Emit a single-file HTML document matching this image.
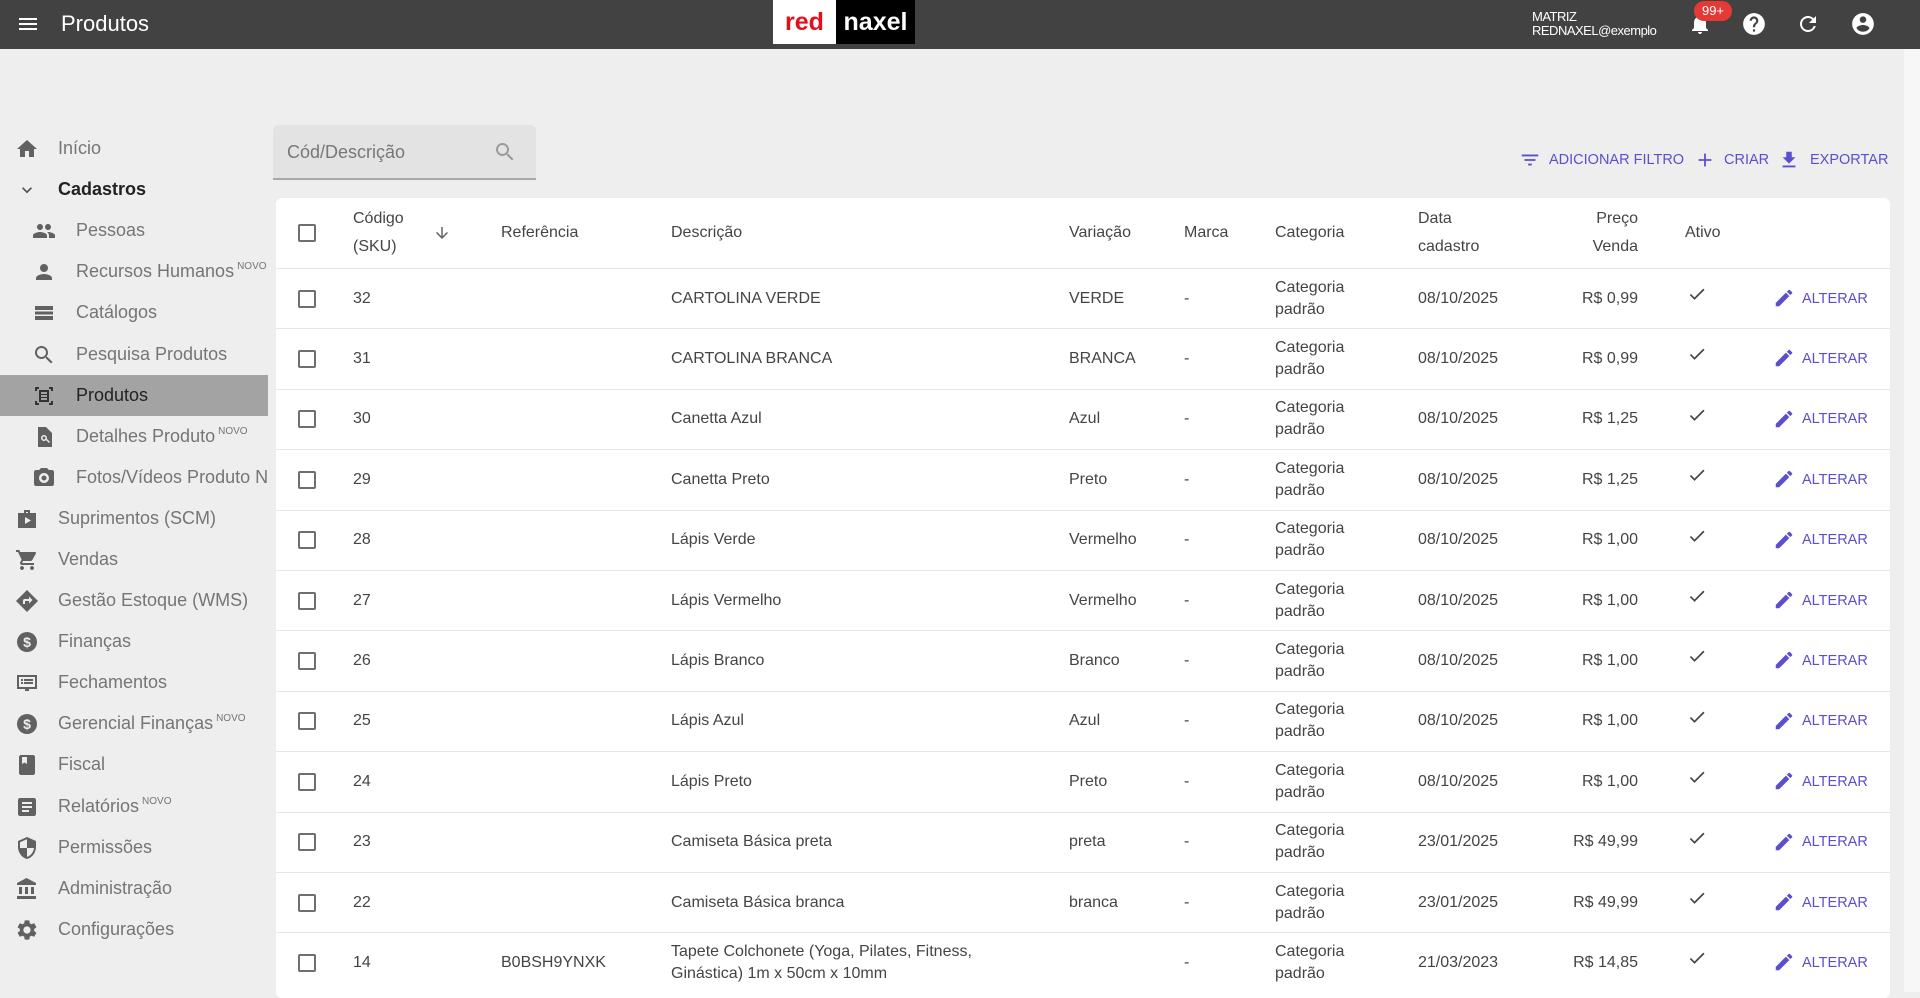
<!DOCTYPE html>
<html><head><meta charset="utf-8"><style>
*{box-sizing:border-box;margin:0;padding:0}
body{width:1920px;height:992px;overflow:hidden;background:#eeeeee;font-family:"Liberation Sans",sans-serif;position:relative}
.top{position:absolute;left:0;top:0;width:1920px;height:49px;background:#424242;color:#fff}
.abs{position:absolute}
svg{display:block}
.side{position:absolute;left:0;top:0;width:268px;height:992px}
.it{position:absolute;left:0;width:268px;height:41px;display:flex;align-items:center;font-size:18px;color:#757575;white-space:nowrap;overflow:hidden}
.it svg{position:absolute;fill:#616161}
.it span{position:absolute;left:58px}
.it.sub span{left:76px}
.it sup{font-size:10px;vertical-align:8px;margin-left:3px}
.card{position:absolute;left:276px;top:198px;width:1614px;height:800px;background:#fff;border-radius:6px;overflow:hidden}
.row{position:absolute;left:0;width:1614px;height:60.4px;border-top:1.5px solid #e6e6e6;font-size:16px;color:#444}
.c{position:absolute;top:0;height:100%;display:flex;align-items:center;line-height:22px}
.cb{position:absolute;left:22px;width:18px;height:18px;border:2px solid #6f6f6f;border-radius:2px;top:50%;margin-top:-9px}
.hd{font-size:16px;color:#444}
.act{color:#5b4fcf;font-size:14.5px}
</style></head><body>

<div class="top">
 <svg class="abs" style="left:16px;top:12px" width="24" height="24" viewBox="0 0 24 24"><path fill="#fff" d="M3 18h18v-2H3v2zm0-5h18v-2H3v2zm0-7v2h18V6H3z"/></svg>
 <div class="abs" style="left:61px;top:11px;font-size:22px">Produtos</div>
 <div class="abs" style="left:773px;top:0;width:63px;height:44px;background:#fff;color:#e3101a;font-weight:bold;font-size:25px;text-align:center;line-height:44px">red</div>
 <div class="abs" style="left:836px;top:0;width:79px;height:44px;background:#000;color:#fff;font-weight:bold;font-size:25px;text-align:center;line-height:44px">naxel</div>
 <div class="abs" style="left:1532px;top:10px;font-size:13px;line-height:14px;letter-spacing:-0.5px">MATRIZ<br>REDNAXEL@exemplo</div>
 <svg class="abs" style="left:1688px;top:12px" width="24" height="24" viewBox="0 0 24 24"><path fill="#fff" d="M12 22c1.1 0 2-.9 2-2h-4c0 1.1.89 2 2 2zm6-6v-5c0-3.07-1.64-5.64-4.5-6.32V4c0-.83-.67-1.5-1.5-1.5s-1.5.67-1.5 1.5v.68C7.63 5.36 6 7.92 6 11v5l-2 2v1h16v-1l-2-2z"/></svg>
 <div class="abs" style="left:1694px;top:1px;width:38px;height:20px;border-radius:10px;background:#e53935;font-size:13px;text-align:center;line-height:20px">99+</div>
 <svg class="abs" style="left:1741px;top:11px" width="26" height="26" viewBox="0 0 24 24"><path fill="#fff" d="M12 2C6.48 2 2 6.48 2 12s4.48 10 10 10 10-4.48 10-10S17.52 2 12 2zm1 17h-2v-2h2v2zm2.07-7.75l-.9.92C13.45 12.9 13 13.5 13 15h-2v-.5c0-1.1.45-2.1 1.17-2.83l1.24-1.26c.37-.36.59-.86.59-1.41 0-1.1-.9-2-2-2s-2 .9-2 2H8c0-2.21 1.79-4 4-4s4 1.79 4 4c0 .88-.36 1.68-.93 2.250z"/></svg>
 <svg class="abs" style="left:1796px;top:12px" width="24" height="24" viewBox="0 0 24 24"><path fill="#fff" d="M17.65 6.35A7.958 7.958 0 0012 4c-4.42 0-7.99 3.58-7.99 8s3.57 8 7.99 8c3.73 0 6.84-2.55 7.73-6h-2.08A5.990 5.990 0 0112 18c-3.31 0-6-2.69-6-6s2.69-6 6-6c1.66 0 3.14.69 4.22 1.78L13 11h7V4l-2.35 2.35z"/></svg>
 <svg class="abs" style="left:1850px;top:11px" width="26" height="26" viewBox="0 0 24 24"><path fill="#fff" d="M12 2C6.48 2 2 6.48 2 12s4.48 10 10 10 10-4.48 10-10S17.52 2 12 2zm0 3c1.66 0 3 1.34 3 3s-1.34 3-3 3-3-1.34-3-3 1.34-3 3-3zm0 14.2a7.2 7.2 0 01-6-3.22c.03-1.99 4-3.08 6-3.08 1.99 0 5.97 1.09 6 3.08a7.2 7.2 0 01-6 3.22z"/></svg>
</div>
<div class="abs" style="left:1904px;top:49px;width:16px;height:943px;background:#f7f7f7"></div>

<div class="side">
 <div class="it" style="top:128px"><svg style="left:15px" width="24" height="24" viewBox="0 0 24 24"><path d="M10 20v-6h4v6h5v-8h3L12 3 2 12h3v8z"/></svg><span>Início</span></div>
 <div class="it" style="top:169px;color:#222;font-weight:bold"><svg style="left:17px" width="20" height="20" viewBox="0 0 24 24"><path fill="#555" d="M7.41 8.59L12 13.17l4.59-4.58L18 10l-6 6-6-6z"/></svg><span>Cadastros</span></div>
 <div class="it sub" style="top:210px"><svg style="left:32px" width="24" height="24" viewBox="0 0 24 24"><path d="M16 11c1.66 0 2.99-1.34 2.99-3S17.66 5 16 5c-1.66 0-3 1.34-3 3s1.34 3 3 3zm-8 0c1.66 0 2.99-1.34 2.99-3S9.66 5 8 5C6.34 5 5 6.34 5 8s1.34 3 3 3zm0 2c-2.33 0-7 1.17-7 3.5V19h14v-2.5c0-2.33-4.67-3.5-7-3.5zm8 0c-.29 0-.62.02-.97.05 1.16.84 1.97 1.97 1.97 3.45V19h6v-2.5c0-2.33-4.67-3.5-7-3.5z"/></svg><span>Pessoas</span></div>
 <div class="it sub" style="top:251px"><svg style="left:32px" width="24" height="24" viewBox="0 0 24 24"><path d="M12 12c2.21 0 4-1.79 4-4s-1.79-4-4-4-4 1.79-4 4 1.79 4 4 4zm0 2c-2.67 0-8 1.34-8 4v2h16v-2c0-2.66-5.33-4-8-4z"/></svg><span>Recursos Humanos<sup>NOVO</sup></span></div>
 <div class="it sub" style="top:292px"><svg style="left:32px" width="24" height="24" viewBox="0 0 24 24"><path d="M3 5h18v4H3zM3 10.5h18v3H3zM3 15h18v4H3z"/></svg><span>Catálogos</span></div>
 <div class="it sub" style="top:334px"><svg style="left:32px" width="24" height="24" viewBox="0 0 24 24"><path d="M15.5 14h-.79l-.28-.27C15.41 12.59 16 11.11 16 9.5 16 5.91 13.09 3 9.5 3S3 5.91 3 9.5 5.91 16 9.5 16c1.61 0 3.09-.59 4.23-1.57l.27.28v.79l5 4.99L20.49 19l-4.99-5zm-6 0C7.01 14 5 11.99 5 9.5S7.01 5 9.5 5 14 7.01 14 9.5 11.99 14 9.5 14z"/></svg><span>Pesquisa Produtos</span></div>
 <div class="it sub" style="top:375px;background:#a3a3a3;color:#222"><svg style="left:32px" width="24" height="24" viewBox="0 0 24 24"><path fill="#333" d="M3 3h4v2H5v2H3zM17 3h4v4h-2V5h-2zM3 17h2v2h2v2H3zM19 17h2v4h-4v-2h2zM7 6h10v12H7zm2 2v2h6V8zm0 3v2h6v-2zm0 3v2h6v-2z"/></svg><span>Produtos</span></div>
 <div class="it sub" style="top:416px"><svg style="left:32px" width="24" height="24" viewBox="0 0 24 24"><path d="M6 2h8l6 6v14H6zM12 10a3 3 0 100 6 3 3 0 000-6zm0 1.5a1.5 1.5 0 110 3 1.5 1.5 0 010-3zM14 15l3 3 1-1-3-3z"/></svg><span>Detalhes Produto<sup>NOVO</sup></span></div>
 <div class="it sub" style="top:457px"><svg style="left:32px" width="24" height="24" viewBox="0 0 24 24"><path d="M9 2L7.17 4H4c-1.1 0-2 .9-2 2v12c0 1.1.9 2 2 2h16c1.1 0 2-.9 2-2V6c0-1.1-.9-2-2-2h-3.17L15 2H9zm3 15c-2.76 0-5-2.24-5-5s2.24-5 5-5 5 2.24 5 5-2.24 5-5 5zm0-7.5a2.5 2.5 0 100 5 2.5 2.5 0 000-5z"/></svg><span>Fotos/Vídeos Produto NOVO</span></div>
 <div class="it" style="top:498px"><svg style="left:15px" width="24" height="24" viewBox="0 0 24 24"><path d="M9 3h6v3h6v15H3V6h6zm2 2v1h2V5zM10 10v7l6-3.5z"/></svg><span>Suprimentos (SCM)</span></div>
 <div class="it" style="top:539px"><svg style="left:15px" width="24" height="24" viewBox="0 0 24 24"><path d="M7 18c-1.1 0-1.99.9-1.99 2S5.9 22 7 22s2-.9 2-2-.9-2-2-2zM1 2v2h2l3.6 7.59-1.35 2.45c-.16.28-.25.61-.25.96 0 1.1.9 2 2 2h12v-2H7.42c-.14 0-.25-.11-.25-.25l.03-.12.9-1.63h7.45c.75 0 1.41-.41 1.75-1.03l3.58-6.49A1 1 0 0020 4H5.21l-.94-2H1zm16 16c-1.1 0-1.99.9-1.99 2s.89 2 1.99 2 2-.9 2-2-.9-2-2-2z"/></svg><span>Vendas</span></div>
 <div class="it" style="top:580px"><svg style="left:15px" width="24" height="24" viewBox="0 0 24 24"><path d="M12 1l11 11-11 11L1 12zM8 11v4h2v-3h4v2.5l3.5-3.5L14 7.5V10H9z"/></svg><span>Gestão Estoque (WMS)</span></div>
 <div class="it" style="top:621px"><svg style="left:15px" width="24" height="24" viewBox="0 0 24 24"><circle cx="12" cy="12" r="10"/><text x="12" y="17" text-anchor="middle" font-size="14" font-weight="bold" fill="#eee" font-family="Liberation Sans">$</text></svg><span>Finanças</span></div>
 <div class="it" style="top:662px"><svg style="left:15px" width="24" height="24" viewBox="0 0 24 24"><path d="M2 4h20v14h-8v2h-4v-2H2zm2 2v10h16V6zm2 2h2v2H6zm3 0h9v2H9zm-3 3h2v2H6zm3 0h9v2H9z"/></svg><span>Fechamentos</span></div>
 <div class="it" style="top:703px"><svg style="left:15px" width="24" height="24" viewBox="0 0 24 24"><circle cx="12" cy="12" r="10"/><text x="12" y="17" text-anchor="middle" font-size="14" font-weight="bold" fill="#eee" font-family="Liberation Sans">$</text></svg><span>Gerencial Finanças<sup>NOVO</sup></span></div>
 <div class="it" style="top:744px"><svg style="left:15px" width="24" height="24" viewBox="0 0 24 24"><path d="M6 2h12c1.1 0 2 .9 2 2v16c0 1.1-.9 2-2 2H6c-1.1 0-2-.9-2-2V4c0-1.1.9-2 2-2zm1 2v7l2.5-1.5L12 11V4z"/></svg><span>Fiscal</span></div>
 <div class="it" style="top:786px"><svg style="left:15px" width="24" height="24" viewBox="0 0 24 24"><path d="M19 3H5c-1.1 0-2 .9-2 2v14c0 1.1.9 2 2 2h14c1.1 0 2-.9 2-2V5c0-1.1-.9-2-2-2zm-5 14H7v-2h7v2zm3-4H7v-2h10v2zm0-4H7V7h10v2z"/></svg><span>Relatórios<sup>NOVO</sup></span></div>
 <div class="it" style="top:827px"><svg style="left:15px" width="24" height="24" viewBox="0 0 24 24"><path d="M12 1L3 5v6c0 5.55 3.84 10.74 9 12 5.16-1.26 9-6.45 9-12V5l-9-4zm0 10.99h7c-.53 4.12-3.28 7.79-7 8.94V12H5V6.3l7-3.11v8.8z"/></svg><span>Permissões</span></div>
 <div class="it" style="top:868px"><svg style="left:15px" width="24" height="24" viewBox="0 0 24 24"><path d="M4 10v7h3v-7H4zm6 0v7h3v-7h-3zM2 22h19v-3H2v3zm14-12v7h3v-7h-3zm-4.5-9L2 6v2h19V6l-9.5-5z"/></svg><span>Administração</span></div>
 <div class="it" style="top:909px"><svg style="left:15px" width="24" height="24" viewBox="0 0 24 24"><path d="M19.14 12.94c.04-.3.06-.61.06-.94 0-.32-.02-.64-.07-.94l2.03-1.58a.49.49 0 00.12-.61l-1.92-3.32a.488.488 0 00-.59-.22l-2.39.96c-.5-.38-1.03-.7-1.62-.94l-.36-2.54a.484.484 0 00-.48-.41h-3.84c-.24 0-.43.17-.47.41l-.36 2.54c-.59.24-1.13.57-1.62.94l-2.39-.96c-.22-.08-.47 0-.59.22L2.74 8.87c-.12.21-.08.47.12.61l2.03 1.58c-.05.3-.09.63-.09.94s.02.64.07.94l-2.03 1.58a.49.49 0 00-.12.61l1.92 3.32c.12.22.37.29.59.22l2.39-.96c.5.38 1.03.7 1.62.94l.36 2.54c.05.24.24.41.48.41h3.84c.24 0 .44-.17.47-.41l.36-2.54c.59-.24 1.13-.56 1.62-.94l2.39.96c.22.08.47 0 .59-.22l1.92-3.32c.12-.22.07-.47-.12-.61l-2.01-1.58zM12 15.6c-1.98 0-3.6-1.62-3.6-3.6s1.62-3.6 3.6-3.6 3.6 1.62 3.6 3.6-1.62 3.6-3.6 3.6z"/></svg><span>Configurações</span></div>
</div>

<div class="abs" style="left:273px;top:125px;width:263px;height:55px;background:#e3e3e3;border-radius:6px 6px 0 0;border-bottom:2px solid #a8a8a8">
 <div class="abs" style="left:14px;top:17px;font-size:18px;color:#777">Cód/Descrição</div>
 <svg class="abs" style="left:220px;top:15px" width="24" height="24" viewBox="0 0 24 24"><path fill="#9a9a9a" d="M15.5 14h-.79l-.28-.27C15.41 12.59 16 11.11 16 9.5 16 5.91 13.09 3 9.5 3S3 5.91 3 9.5 5.91 16 9.5 16c1.61 0 3.09-.59 4.23-1.57l.27.28v.79l5 4.99L20.49 19l-4.99-5zm-6 0C7.01 14 5 11.99 5 9.5S7.01 5 9.5 5 14 7.01 14 9.5 11.99 14 9.5 14z"/></svg>
</div>

<div class="act">
 <svg class="abs" style="left:1519px;top:149px" width="22" height="22" viewBox="0 0 24 24"><path fill="#5b4fcf" d="M10 18h4v-2h-4v2zM3 6v2h18V6H3zm3 7h12v-2H6v2z"/></svg>
 <div class="abs" style="left:1549px;top:152px">ADICIONAR FILTRO</div>
 <svg class="abs" style="left:1694px;top:149px" width="22" height="22" viewBox="0 0 24 24"><path fill="#5b4fcf" d="M19 13h-6v6h-2v-6H5v-2h6V5h2v6h6v2z"/></svg>
 <div class="abs" style="left:1724px;top:152px">CRIAR</div>
 <svg class="abs" style="left:1778px;top:149px" width="22" height="22" viewBox="0 0 24 24"><path fill="#5b4fcf" d="M19 9h-4V3H9v6H5l7 7 7-7zM5 18v2h14v-2H5z"/></svg>
 <div class="abs" style="left:1810px;top:152px">EXPORTAR</div>
</div>

<div class="card">
 <div class="row hd" style="top:0;height:70px;border-top:none">
  <div class="cb"></div>
  <div class="c" style="left:77px;line-height:28px">Código<br>(SKU)</div>
  <svg class="abs" style="left:157px;top:26px" width="18" height="18" viewBox="0 0 24 24"><path fill="#666" d="M20 12l-1.41-1.41L13 16.17V4h-2v12.17l-5.58-5.59L4 12l8 8 8-8z"/></svg>
  <div class="c" style="left:225px">Referência</div>
  <div class="c" style="left:395px">Descrição</div>
  <div class="c" style="left:793px">Variação</div>
  <div class="c" style="left:908px">Marca</div>
  <div class="c" style="left:999px">Categoria</div>
  <div class="c" style="left:1142px;line-height:28px">Data<br>cadastro</div>
  <div class="c" style="right:252px;line-height:28px;text-align:right">Preço<br>Venda</div>
  <div class="c" style="left:1409px">Ativo</div>
 </div>
 <div id="rows"></div>
</div>

<script>
var d=[["32","","CARTOLINA VERDE","VERDE","08/10/2025","R$ 0,99"],
["31","","CARTOLINA BRANCA","BRANCA","08/10/2025","R$ 0,99"],
["30","","Canetta Azul","Azul","08/10/2025","R$ 1,25"],
["29","","Canetta Preto","Preto","08/10/2025","R$ 1,25"],
["28","","Lápis Verde","Vermelho","08/10/2025","R$ 1,00"],
["27","","Lápis Vermelho","Vermelho","08/10/2025","R$ 1,00"],
["26","","Lápis Branco","Branco","08/10/2025","R$ 1,00"],
["25","","Lápis Azul","Azul","08/10/2025","R$ 1,00"],
["24","","Lápis Preto","Preto","08/10/2025","R$ 1,00"],
["23","","Camiseta Básica preta","preta","23/01/2025","R$ 49,99"],
["22","","Camiseta Básica branca","branca","23/01/2025","R$ 49,99"],
["14","B0BSH9YNXK","Tapete Colchonete (Yoga, Pilates, Fitness,<br>Ginástica) 1m x 50cm x 10mm","","21/03/2023","R$ 14,85"]];
var h="";
d.forEach(function(r,i){
h+='<div class="row" style="top:'+(70+i*60.4)+'px"><div class="cb"></div>'+
'<div class="c" style="left:77px">'+r[0]+'</div>'+
'<div class="c" style="left:225px">'+r[1]+'</div>'+
'<div class="c" style="left:395px">'+r[2]+'</div>'+
'<div class="c" style="left:793px">'+r[3]+'</div>'+
'<div class="c" style="left:908px">-</div>'+
'<div class="c" style="left:999px">Categoria<br>padrão</div>'+
'<div class="c" style="left:1142px">'+r[4]+'</div>'+
'<div class="c" style="right:252px">'+r[5]+'</div>'+
'<svg class="abs" style="left:1411px;top:15px" width="20" height="20" viewBox="0 0 24 24"><path fill="#444" d="M9 16.17L4.83 12l-1.42 1.41L9 19 21 7l-1.41-1.41z"/></svg>'+
'<svg class="abs" style="left:1497px;top:18px" width="22" height="22" viewBox="0 0 24 24"><path fill="#5b4fcf" d="M3 17.25V21h3.75L17.81 9.94l-3.75-3.75L3 17.25zM20.71 7.04a.996.996 0 000-1.41l-2.34-2.34a.996.996 0 00-1.41 0l-1.83 1.83 3.75 3.75 1.83-1.83z"/></svg>'+
'<div class="c" style="left:1526px;color:#5b4fcf;font-size:14.5px">ALTERAR</div></div>';
});
document.getElementById("rows").innerHTML=h;
</script>
</body></html>
